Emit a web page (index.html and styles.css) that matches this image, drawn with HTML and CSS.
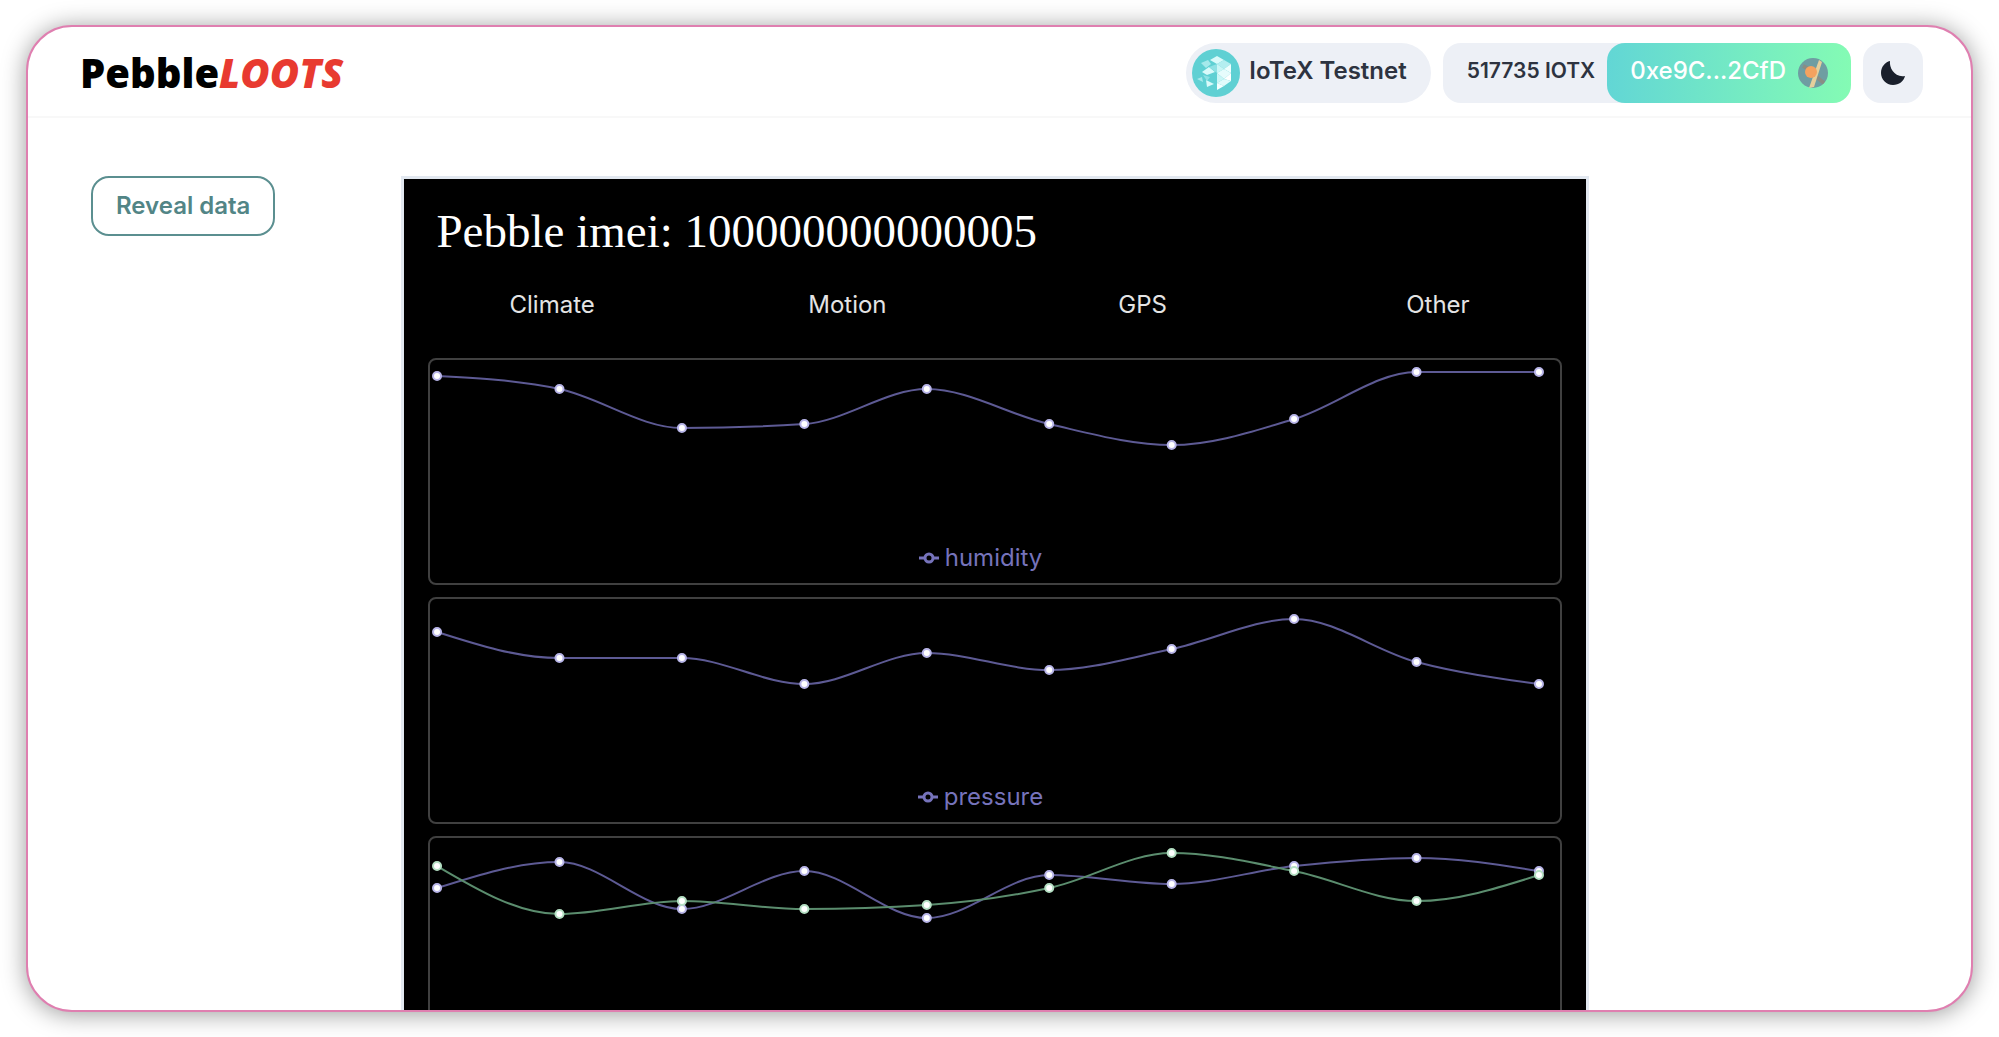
FILE: index.html
```html
<!DOCTYPE html>
<html lang="en">
<head>
<meta charset="utf-8">
<meta name="viewport" content="width=device-width, initial-scale=1">
<title>PebbleLOOTS</title>
<link rel="stylesheet" href="styles.css">
</head>
<body>
<div class="window">
  <header class="topbar">
    <a class="logo" href="#">Pebble<span class="logo-accent">LOOTS</span></a>
    <div class="actions">
      <button class="network" type="button">
        <svg class="network-icon" viewBox="0 0 48 48" aria-hidden="true">
          <circle cx="24" cy="24" r="24" fill="#5fd0d3"/>
          <path fill="#d9fafa" d="M25 7l7 4-7 4-7-4z"/>
          <path fill="#b4eef0" d="M32 11l7 4-7 5-7-5z"/>
          <path fill="#effefe" d="M32 20l7-5v9z"/>
          <path fill="#c9f6f6" d="M25 15l7 5-7 4z"/>
          <path fill="#e6fcfc" d="M32 20l7 4-7 6-7-6z"/>
          <path fill="#fff" d="M39 24v8l-7-2z"/>
          <path fill="#c9f6f6" d="M25 24l7 6-7 4z"/>
          <path fill="#e0fbfb" d="M32 30l7 2-7 5-7-3z"/>
          <path fill="#f4ffff" d="M25 34l7 3-7 4z"/>
          <path fill="#a5e9eb" d="M9 14l7-3 3 4-5 4z"/>
          <path fill="#d9fafa" d="M10 23l7-5 6 5-8 3z"/>
          <path fill="#8fe1e4" d="M17 18l8-3v9z"/>
          <path fill="#a5e9eb" d="M5 30l5-2 1 5z"/>
          <path fill="#d9fafa" d="M14 31l8 4-7 3z"/>
          <path fill="#8fe1e4" d="M11 26l7 2-3 4z"/>
        </svg>
        <span class="lifted">IoTeX Testnet</span>
      </button>
      <div class="wallet">
        <span class="balance lifted">517735 IOTX</span>
        <button class="account" type="button">
          <span class="lifted">0xe9C...2CfD</span>
          <svg class="avatar" viewBox="0 0 30 30" aria-hidden="true">
            <circle cx="15" cy="15" r="15" fill="#6f9da2"/>
            <path d="M16 17l10 8M5 8l8 4" stroke="#8a8d84" stroke-width="4"/>
            <path d="M21 2l3 2-8 25-5 1z" fill="#e5cf9c"/>
            <circle cx="13" cy="14" r="6" fill="#f5a25f"/>
          </svg>
        </button>
      </div>
      <button class="theme" type="button" aria-label="Switch to dark mode">
        <svg class="moon" viewBox="0 0 24 24" aria-hidden="true">
          <path fill="#1a202c" d="M9 0C8 7 14 17 24 15 23 20 18 24 12 24 5 24 0 18 0 12 0 6 4 1 9 0z"/>
        </svg>
      </button>
    </div>
  </header>

  <main class="content">
    <div class="side">
      <button class="reveal" type="button">Reveal data</button>
    </div>
    <section class="panel">
      <h1 class="title">Pebble imei: 100000000000005</h1>
      <nav class="tabs">
        <button class="tab" type="button">Climate</button>
        <button class="tab" type="button">Motion</button>
        <button class="tab" type="button">GPS</button>
        <button class="tab" type="button">Other</button>
      </nav>
      <div class="charts">
        <figure class="card">
          <svg class="plot" viewBox="0 0 1128 184" data-violet="16,29,68,64,29,64,85,59,12,12"></svg>
          <figcaption class="legend">
            <svg class="key" viewBox="0 0 20 12" aria-hidden="true"><path d="M0 6h6M14 6h6"/><circle cx="10" cy="6" r="4"/></svg>humidity
          </figcaption>
        </figure>
        <figure class="card">
          <svg class="plot" viewBox="0 0 1128 184" data-violet="33,59,59,85,54,71,50,20,63,85"></svg>
          <figcaption class="legend">
            <svg class="key" viewBox="0 0 20 12" aria-hidden="true"><path d="M0 6h6M14 6h6"/><circle cx="10" cy="6" r="4"/></svg>pressure
          </figcaption>
        </figure>
        <figure class="card">
          <svg class="plot" viewBox="0 0 1128 184" data-violet="50,24,71,33,80,37,46,28,20,33" data-green="28,76,63,71,67,50,15,33,63,37"></svg>
        </figure>
      </div>
    </section>
    <div></div>
  </main>
</div>
<script src="charts.js"></script>
</body>
</html>
```
FILE: styles.css
```css
* { box-sizing: border-box; }

body {
  margin: 0;
  padding: 25px 26px;
  background: #fff;
  color: #2d3340;
  font-family: Inter, "Liberation Sans", sans-serif;
  font-size: 24px;
  line-height: 28px;
}

button {
  margin: 0;
  border: 0;
  font: inherit;
  color: inherit;
  cursor: pointer;
}

.window {
  height: calc(100vh - 50px);
  overflow: hidden;
  border: 2px solid #df7fb0;
  border-radius: 46px;
  background: #fff;
  box-shadow: 0 2px 24px rgba(0, 0, 0, 0.4);
}

.topbar {
  display: flex;
  align-items: center;
  justify-content: space-between;
  padding: 16px 48px 13px 52px;
  border-bottom: 2px solid #f8f8f8;
}

.logo {
  color: #000;
  font-family: "Open Sans", "Noto Sans", sans-serif;
  font-size: 40px;
  font-weight: 800;
  line-height: 60px;
  text-decoration: none;
}

.logo-accent {
  color: #e83a30;
  font-style: italic;
}

.actions,
.network,
.wallet,
.account {
  display: flex;
  align-items: center;
}

.actions { gap: 12px; }

.lifted { padding-bottom: 4px; }

.network {
  gap: 9px;
  height: 60px;
  padding: 0 24px 0 6px;
  border-radius: 30px;
  background: #edf0f6;
  font-weight: 600;
}

.network-icon {
  width: 48px;
  height: 48px;
}

.wallet {
  border-radius: 18px;
  background: #edf0f6;
}

.balance {
  padding-left: 24px;
  padding-right: 12px;
  font-size: 21px;
  font-weight: 600;
}

.account {
  gap: 12px;
  height: 60px;
  padding: 0 23px;
  border-radius: 18px;
  background: linear-gradient(90deg, #62d6d5, #84fbb4);
  color: #fff;
  font-weight: 500;
}

.avatar {
  width: 30px;
  height: 30px;
}

.theme {
  display: flex;
  align-items: center;
  justify-content: center;
  width: 60px;
  height: 60px;
  border-radius: 18px;
  background: #edf0f6;
}

.moon {
  width: 24px;
  height: 24px;
}

.content {
  display: grid;
  grid-template-columns: 311fr 1189fr 320fr;
  align-items: start;
  padding: 58px 63px;
}

.reveal {
  height: 60px;
  padding: 0 23px;
  border: 2px solid #5b8f90;
  border-radius: 18px;
  background: #fff;
  color: #528586;
  font-weight: 600;
  white-space: nowrap;
}

.panel {
  border: 3px solid #e2e8f0;
  background: #000;
}

.title {
  margin: 0;
  padding: 24px 32px 0;
  color: #fff;
  font-family: "Liberation Serif", serif;
  font-size: 47px;
  font-weight: 400;
  line-height: 56px;
}

.tabs {
  display: grid;
  grid-template-columns: repeat(4, 1fr);
  padding: 16px 0 23px;
}

.tab {
  height: 60px;
  padding: 0;
  background: none;
  color: #e4e4e4;
}

.charts {
  display: grid;
  gap: 12px;
  padding: 0 24px 24px;
}

.card {
  min-height: 227px;
  margin: 0;
  border: 2px solid #404040;
  border-radius: 8px;
}

.plot {
  display: block;
  width: 100%;
}

.plot path {
  fill: none;
  stroke-width: 2;
}

.plot circle {
  fill: #fff;
  stroke-width: 2;
}

.plot path.violet { stroke: #5d5a94; }
.plot path.green { stroke: #5b8d6e; }
.plot circle.violet { stroke: #b8b5e8; }
.plot circle.green { stroke: #b4dfc3; }

.legend {
  display: flex;
  align-items: center;
  justify-content: center;
  gap: 6px;
  padding-right: 29px;
  color: #7673bb;
}

.key {
  width: 20px;
  height: 12px;
  fill: none;
  stroke: #7673bb;
  stroke-width: 3;
}
```
FILE: charts.js
```js
const NS = "http://www.w3.org/2000/svg";
const LEFT = 7;
const RIGHT = 1108;

// Monotone cubic path through evenly spaced points.
function monotonePath(xs, ys) {
  const n = xs.length;
  const h = xs[1] - xs[0];
  const slopes = ys.slice(1).map((y, i) => (y - ys[i]) / h);
  const m = new Array(n);
  for (let i = 1; i < n - 1; i++) {
    const a = slopes[i - 1];
    const b = slopes[i];
    m[i] = (Math.sign(a) + Math.sign(b)) *
      Math.min(Math.abs(a), Math.abs(b), Math.abs(a + b) / 4);
  }
  m[0] = (3 * slopes[0] - m[1]) / 2;
  m[n - 1] = (3 * slopes[n - 2] - m[n - 2]) / 2;
  let d = `M${xs[0]} ${ys[0]}`;
  for (let i = 0; i < n - 1; i++) {
    d += `C${xs[i] + h / 3} ${ys[i] + m[i] * h / 3} ` +
      `${xs[i + 1] - h / 3} ${ys[i + 1] - m[i + 1] * h / 3} ` +
      `${xs[i + 1]} ${ys[i + 1]}`;
  }
  return d;
}

function add(svg, name, attributes) {
  const node = document.createElementNS(NS, name);
  Object.entries(attributes).forEach(([k, v]) => node.setAttribute(k, v));
  svg.appendChild(node);
}

document.querySelectorAll(".plot").forEach((svg) => {
  const series = Object.entries(svg.dataset).map(([color, list]) => {
    const ys = list.split(",").map(Number);
    const xs = ys.map((_, i) => LEFT + i * (RIGHT - LEFT) / (ys.length - 1));
    return { color, xs, ys };
  });
  series.forEach(({ color, xs, ys }) => {
    add(svg, "path", { class: color, d: monotonePath(xs, ys) });
    xs.forEach((x, i) => add(svg, "circle", { class: color, cx: x, cy: ys[i], r: 4 }));
  });
});
```
